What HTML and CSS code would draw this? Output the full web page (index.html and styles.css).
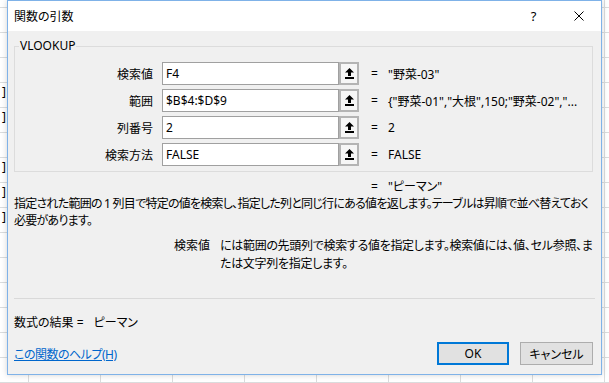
FILE: index.html
```html
<!DOCTYPE html>
<html lang="ja">
<head>
    <meta charset="UTF-8">
    <title>関数の引数</title>
    <link rel="stylesheet" href="styles.css">
</head>
<body>

<div class="sheet">
    <div class="sheet-row first"></div>
    <div class="sheet-row"></div>
    <div class="sheet-row"></div>
    <div class="sheet-row"></div>
    <div class="sheet-row"><span class="cell-text">]</span></div>
    <div class="sheet-row"><span class="cell-text">]</span></div>
    <div class="sheet-row"></div>
    <div class="sheet-row"><span class="cell-text">]</span></div>
    <div class="sheet-row"><span class="cell-text">]</span></div>
    <div class="sheet-row"><span class="cell-text">]</span></div>
    <div class="sheet-row"></div>
    <div class="sheet-row"></div>
    <div class="sheet-row"></div>
    <div class="sheet-row"></div>
    <div class="sheet-row"></div>
    <div class="sheet-row"></div>
</div>

<div class="dialog">
    <div class="titlebar">
        <span class="title">関数の引数</span>
        <span class="caption-btn">?</span>
        <span class="caption-btn">
            <svg width="10" height="10" viewBox="0 0 10 10"><path d="M0.5 0.5L9.5 9.5M9.5 0.5L0.5 9.5" stroke="#000" stroke-width="1"/></svg>
        </span>
    </div>

    <div class="dialog-body">
        <fieldset class="args">
            <legend>VLOOKUP</legend>

            <div class="arg-row">
                <label class="arg-label">検索値</label>
                <input class="ref-input" type="text" value="F4">
                <span class="ref-btn"><svg width="9" height="11" viewBox="0 0 9 11"><path d="M4.5 0L9 4.5H6V8H3V4.5H0Z" fill="#000"/><rect x="0" y="9" width="9" height="2" fill="#000"/></svg></span>
                <span class="arg-eq">=</span>
                <span class="arg-value">"野菜-03"</span>
            </div>

            <div class="arg-row">
                <label class="arg-label">範囲</label>
                <input class="ref-input" type="text" value="$B$4:$D$9">
                <span class="ref-btn"><svg width="9" height="11" viewBox="0 0 9 11"><path d="M4.5 0L9 4.5H6V8H3V4.5H0Z" fill="#000"/><rect x="0" y="9" width="9" height="2" fill="#000"/></svg></span>
                <span class="arg-eq">=</span>
                <span class="arg-value">{"野菜-01","大根",150;"野菜-02","...</span>
            </div>

            <div class="arg-row">
                <label class="arg-label">列番号</label>
                <input class="ref-input" type="text" value="2">
                <span class="ref-btn"><svg width="9" height="11" viewBox="0 0 9 11"><path d="M4.5 0L9 4.5H6V8H3V4.5H0Z" fill="#000"/><rect x="0" y="9" width="9" height="2" fill="#000"/></svg></span>
                <span class="arg-eq">=</span>
                <span class="arg-value">2</span>
            </div>

            <div class="arg-row">
                <label class="arg-label">検索方法</label>
                <input class="ref-input" type="text" value="FALSE">
                <span class="ref-btn"><svg width="9" height="11" viewBox="0 0 9 11"><path d="M4.5 0L9 4.5H6V8H3V4.5H0Z" fill="#000"/><rect x="0" y="9" width="9" height="2" fill="#000"/></svg></span>
                <span class="arg-eq">=</span>
                <span class="arg-value">FALSE</span>
            </div>
        </fieldset>

        <div class="result-line">
            <span class="arg-eq">=</span>
            <span class="arg-value">"ピーマン"</span>
        </div>

        <p class="func-desc">指定された範囲の 1 列目で特定の値を検索し、指定した列と同じ行にある値を返します。テーブルは昇順で並べ替えておく<br>必要があります。</p>

        <div class="arg-help">
            <span class="help-name">検索値</span>
            <p class="help-text">には範囲の先頭列で検索する値を指定します。検索値には、値、セル参照、ま<br>たは文字列を指定します。</p>
        </div>

        <hr class="sep">

        <div class="formula-result"><span>数式の結果 =</span><span class="result-value">ピーマン</span></div>

        <div class="footer">
            <a class="help-link" href="#">この関数のヘルプ(H)</a>
            <button class="btn default" type="button">OK</button>
            <button class="btn" type="button">キャンセル</button>
        </div>
    </div>
</div>

</body>
</html>
```

FILE: styles.css
```css
body {
    margin: 0;
    width: 609px;
    height: 383px;
    overflow: hidden;
    background: #fff;
    font-family: "Noto Sans", "Noto Sans CJK JP", sans-serif;
    font-size: 12px;
    color: #000;
    font-feature-settings: "palt";
}

/* spreadsheet behind the dialog */
.sheet {
    height: 383px;
    background-image: repeating-linear-gradient(to right, transparent 0, transparent 28px, #dadcdd 28px, #dadcdd 29px, transparent 29px, transparent 72px);
}
.sheet-row {
    height: 24px;
    border-bottom: 1px solid #dadcdd;
}
.sheet-row.first {
    height: 7px;
}
.cell-text {
    display: block;
    padding-left: 2px;
    line-height: 18px;
}

/* dialog */
.dialog {
    position: absolute;
    left: 7px;
    top: 0;
    width: 593px;
    height: 373px;
    border: 1px solid #7fb2e8;
    background: #f0f0f0;
    box-shadow: 0 0 6px rgba(0, 0, 0, 0.18);
    display: flex;
    flex-direction: column;
}
.titlebar {
    height: 30px;
    background: #fff;
    display: flex;
    align-items: center;
    padding-left: 6px;
}
.title {
    flex: 1;
}
.caption-btn {
    width: 45px;
    height: 30px;
    display: flex;
    align-items: center;
    justify-content: center;
    font-size: 13px;
}

.dialog-body {
    flex: 1;
    padding: 7px 8px 0 6px;
}

.args {
    margin: 0;
    padding: 8px 0 5px 0;
    border: 1px solid #dcdcdc;
    min-width: 0;
}
.args legend {
    margin-left: 4px;
    padding: 0 1px;
    line-height: 16px;
}

.arg-row {
    display: flex;
    align-items: center;
    height: 23px;
    margin-bottom: 4px;
}
.arg-row:last-child {
    margin-bottom: 0;
}
.arg-label {
    flex-shrink: 0;
    width: 138px;
    margin-right: 9px;
    text-align: right;
}
.ref-input {
    flex-shrink: 0;
    width: 177px;
    height: 23px;
    box-sizing: border-box;
    margin: 0;
    padding: 0 3px;
    border: 1px solid #a0a0a0;
    background: #fff;
    font: inherit;
    color: #000;
    outline: none;
}
.ref-btn {
    flex-shrink: 0;
    width: 20px;
    height: 23px;
    box-sizing: border-box;
    border: 2px solid #b4b4b4;
    background: #f6f6f6;
    display: flex;
    align-items: center;
    justify-content: center;
}
.arg-eq {
    flex-shrink: 0;
    width: 17px;
    margin-left: 12px;
}
.arg-value {
    white-space: nowrap;
}

.result-line {
    display: flex;
    margin-top: 6px;
    padding-left: 345px;
    line-height: 17px;
}

.func-desc {
    margin: 0;
    line-height: 17px;
    white-space: nowrap;
    letter-spacing: -0.75px;
}

.arg-help {
    display: flex;
    margin-top: 8px;
    line-height: 18px;
}
.help-name {
    flex-shrink: 0;
    width: 196px;
    margin-right: 10px;
    text-align: right;
}
.help-text {
    margin: 0;
    white-space: nowrap;
    letter-spacing: -0.3px;
}

.sep {
    margin: 25px -2px 0 0;
    border: none;
    border-top: 1px solid #d9d9d9;
}

.formula-result {
    display: flex;
    margin-top: 15px;
    line-height: 17px;
}
.result-value {
    margin-left: 10px;
}

.footer {
    display: flex;
    align-items: center;
    margin-top: 11px;
}
.help-link {
    flex: 1;
    color: #0066cc;
    text-decoration: underline;
    letter-spacing: -0.5px;
}
.btn {
    height: 23px;
    width: 73px;
    margin-left: 11px;
    padding: 0;
    border: 1px solid #adadad;
    background: #e1e1e1;
    font: inherit;
    color: #000;
}
.btn.default {
    width: 72px;
    margin-left: 0;
    border: 2px solid #0078d7;
}
```
